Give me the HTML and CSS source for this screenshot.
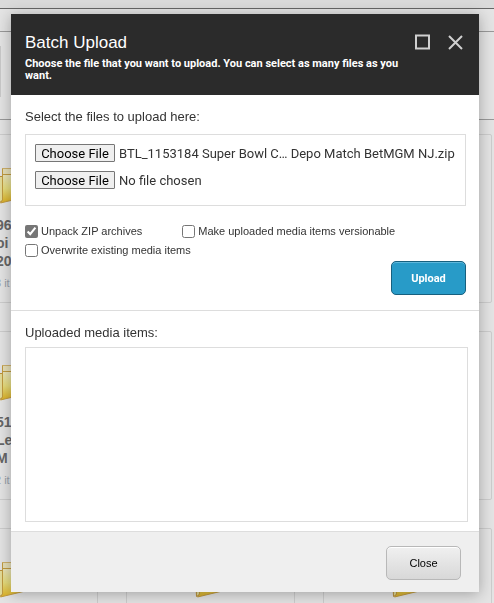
FILE: index.html
```html
<!DOCTYPE html>
<html lang="en">
<head>
<meta charset="utf-8">
<title>Batch Upload</title>
<link rel="stylesheet" href="styles.css">
</head>
<body>
<svg class="defs" aria-hidden="true">
  <defs>
    <linearGradient id="gold" x1="0" y1="0" x2="0" y2="1">
      <stop offset="0" stop-color="#e8e4bc"/>
      <stop offset="0.5" stop-color="#e6dc7c"/>
      <stop offset="1" stop-color="#dcb022"/>
    </linearGradient>
    <symbol id="folder" viewBox="0 0 48 48">
      <path d="M13.500 4.500h28v28l-28 2z" fill="#e6dfb8" stroke="#cdb06c"/>
      <path d="M9.500 12.500h4v24l-3 2z" fill="#e3dc98" stroke="#b98f3c"/>
      <path d="M13.500 10.500h29v21l-31 7.500 2-3z" fill="url(#gold)"/>
      <path d="M42.500 31.500l-31 7.500 2-3v-31.500M13.500 10.500h29" fill="none" stroke="#c09a40"/>
    </symbol>
  </defs>
</svg>

<div class="page" aria-hidden="true">
  <div class="topbar"></div>
  <div class="ribbon"></div>
  <div class="toolbar"><span class="chunk"></span></div>
  <div class="cards">
    <div class="card">
      <svg class="folder"><use href="#folder"/></svg>
      <div class="name">96<br>oi<br>20</div>
      <div class="count">3 it</div>
    </div>
    <div class="card"></div>
    <div class="card"></div>
    <div class="card">
      <svg class="folder"><use href="#folder"/></svg>
      <div class="name">51<br>Le<br>M</div>
      <div class="count">2 it</div>
    </div>
    <div class="card"></div>
    <div class="card"></div>
    <div class="card"><svg class="folder"><use href="#folder"/></svg></div>
    <div class="card"><svg class="folder"><use href="#folder"/></svg></div>
    <div class="card"><svg class="folder"><use href="#folder"/></svg></div>
  </div>
</div>

<div class="overlay">
  <form class="dialog" role="dialog" aria-labelledby="title">
    <header class="head">
      <div class="heading">
        <h1 id="title">Batch Upload</h1>
        <p>Choose the file that you want to upload. You can select as many files as you want.</p>
      </div>
      <div class="window-buttons">
        <button type="button" aria-label="Maximize"><svg viewBox="0 0 16 16"><path d="M1 1.500h13v13H1z"/></svg></button>
        <button type="button" aria-label="Close dialog"><svg viewBox="0 0 16 16"><path d="M1 2l13 13M14 2l-13 13"/></svg></button>
      </div>
    </header>

    <section class="select">
      <h2>Select the files to upload here:</h2>
      <div class="files">
        <div class="file-row">
          <input type="file" id="file1">
          <label for="file1">BTL_1153184 Super Bowl C… Depo Match BetMGM NJ.zip</label>
        </div>
        <div class="file-row">
          <input type="file" id="file2">
          <label for="file2">No file chosen</label>
        </div>
      </div>
      <div class="options">
        <label><input type="checkbox" checked>Unpack ZIP archives</label>
        <label><input type="checkbox">Make uploaded media items versionable</label>
        <label><input type="checkbox">Overwrite existing media items</label>
      </div>
      <div class="actions"><button type="submit" class="btn primary">Upload</button></div>
    </section>

    <section class="uploaded">
      <h2>Uploaded media items:</h2>
      <div class="results"></div>
    </section>

    <footer class="foot"><button type="button" class="btn">Close</button></footer>
  </form>
</div>
</body>
</html>
```
FILE: styles.css
```css
* { box-sizing: border-box; }

html, body { height: 100%; }

body {
  margin: 0;
  overflow: hidden;
  background: #e4e4e4;
  color: #333;
  font-family: "Liberation Sans", Arial, sans-serif;
  font-size: 13px;
}

h1, h2, p { margin: 0; }

.defs { position: absolute; width: 0; height: 0; }

/* Media library behind the dialog */
.page { height: 100%; overflow: hidden; }
.topbar { height: 9px; background: #dadada; border-bottom: 1px solid #666; }
.ribbon { height: 23px; border-bottom: 1px solid #999; }
.toolbar {
  height: 88px;
  padding-top: 14px;
  border-bottom: 1px solid #999;
}
.chunk {
  display: block;
  width: 1px;
  height: 51px;
  background: #c8c8c8;
}
.cards {
  display: grid;
  grid-template-columns: repeat(3, 169px);
  grid-auto-rows: 169px;
  gap: 28px;
  justify-content: end;
  padding: 14px 2px 0 0;
}
.card {
  padding-top: 29px;
  border: 1px solid #cdcdcd;
  border-radius: 2px;
}
.folder {
  display: block;
  width: 48px;
  height: 48px;
  margin: 0 0 4px 59px;
}
.name {
  padding-left: 66px;
  font-weight: bold;
  font-size: 14px;
  line-height: 18px;
  color: #666;
}
.count {
  padding-left: 65px;
  font-size: 11px;
  line-height: 26px;
  color: #99a0ab;
}

/* Dialog */
.overlay {
  position: fixed;
  inset: 0;
  padding: 14px 15px 11px 11px;
}
.dialog {
  display: flex;
  flex-direction: column;
  height: 100%;
  background: #fff;
  box-shadow: 0 2px 14px rgba(0, 0, 0, 0.3);
}
.head {
  display: flex;
  justify-content: space-between;
  gap: 8px;
  padding: 19px 15px 13px 14px;
  background: #2b2b2b;
  color: #fff;
}
.head h1 {
  font-size: 17px;
  font-weight: normal;
  line-height: 20px;
  margin-bottom: 5px;
}
.head p {
  font-family: Roboto, Arial, sans-serif;
  font-size: 11px;
  font-weight: bold;
  line-height: 12px;
}
.window-buttons { display: flex; gap: 17px; padding-top: 1px; }
.window-buttons button {
  width: 16px;
  height: 16px;
  padding: 0;
  border: 0;
  background: none;
}
.window-buttons svg {
  display: block;
  width: 16px;
  height: 16px;
  fill: none;
  stroke: #d0d0d0;
  stroke-width: 2;
}

.select { padding: 14px 13px 15px 14px; }
h2 {
  font-size: 13px;
  font-weight: normal;
  line-height: 16px;
}
.files {
  display: grid;
  gap: 9px;
  margin-top: 9px;
  padding: 9px 9px 16px;
  border: 1px solid #ddd;
}
.file-row {
  display: flex;
  align-items: center;
  gap: 4px;
  height: 18px;
  white-space: nowrap;
  font-family: Roboto, Arial, sans-serif;
}
.file-row input {
  flex: none;
  width: 80px;
  height: 18px;
  color: transparent;
}
.file-row input::file-selector-button {
  width: 80px;
  height: 18px;
  margin: 0;
  padding: 0;
  border: 1px solid #767676;
  border-radius: 1px;
  background: #efefef;
  color: #000;
  font: 13px Roboto, Arial, sans-serif;
}
.options {
  display: flex;
  flex-wrap: wrap;
  gap: 5px 40px;
  margin-top: 18px;
  font-size: 11px;
}
.options label {
  display: flex;
  align-items: center;
  gap: 3px;
  height: 14px;
}
.options input {
  width: 13px;
  height: 13px;
  margin: 0;
  accent-color: #767676;
}
.actions {
  display: flex;
  justify-content: flex-end;
  margin-top: 4px;
}
.btn {
  width: 75px;
  height: 34px;
  padding: 0;
  border: 1px solid #b8b8b8;
  border-radius: 5px;
  background: linear-gradient(#f0f0f0, #d8d8d8);
  box-shadow: inset 0 1px #fff;
  color: #000;
  font-family: inherit;
  font-size: 11px;
}
.btn.primary {
  border-color: #17607f;
  background: #289bc8;
  box-shadow: inset 0 1px #5fb8dc;
  color: #fff;
  font-family: Roboto, Arial, sans-serif;
  font-weight: bold;
}

.uploaded {
  flex: 1;
  display: flex;
  flex-direction: column;
  padding: 14px 11px 9px 14px;
  border-top: 1px solid #ddd;
}
.results {
  flex: 1;
  margin-top: 6px;
  border: 1px solid #ddd;
}

.foot {
  display: flex;
  justify-content: flex-end;
  padding: 14px 18px 12px;
  border-top: 1px solid #ddd;
  background: #efefef;
}
```
